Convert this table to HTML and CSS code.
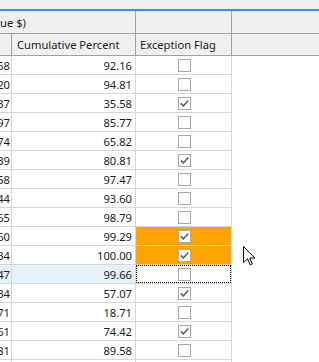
FILE: index.html
```html
<!DOCTYPE html>
<html>
<head>
<meta charset="utf-8">
<link rel="stylesheet" href="styles.css">
</head>
<body>
<div class="grid">
  <div class="topstrip"></div>
  <div class="blueline"></div>
  <div class="hrow h1">
    <div class="hc c12"><span class="grp">ue $)</span></div>
    <div class="hc c3"></div>
    <div class="hc rest"></div>
  </div>
  <div class="hrow h2">
    <div class="hc c1"></div>
    <div class="hc c2 lbl">Cumulative Percent</div>
    <div class="hc c3 lbl">Exception Flag</div>
    <div class="hc rest"></div>
  </div>
  <div id="body"></div>
</div>
<svg class="cursor" width="13" height="20" viewBox="0 0 13 20">
  <path d="M0.5 0.5 L0.5 16.5 L4.5 12.8 L7.2 18.8 L9.3 17.9 L6.7 12 L11.8 12 Z" fill="#fff" stroke="#000" stroke-width="1" stroke-linejoin="miter"/>
</svg>
<script>
const rows = [
  ["1,58","92.16",0],["1,20","94.81",0],["1,37","35.58",1],["1,97","85.77",0],
  ["1,74","65.82",0],["1,39","80.81",1],["1,58","97.47",0],["1,44","93.60",0],
  ["1,65","98.79",0],["1,60","99.29",1,"hl"],["1,34","100.00",1,"hl"],["1,47","99.66",0,"sel"],
  ["1,34","57.07",1],["1,71","18.71",0],["1,61","74.42",1],["1,81","89.58",0],["1,00","",0]
];
const check = '<svg width="13" height="13" viewBox="0 0 13 13"><path d="M2.8 6.4 L5.3 8.9 L10.3 3.5" fill="none" stroke="#5a5a5a" stroke-width="1.5"/></svg>';
const body = document.getElementById('body');
body.innerHTML = rows.map(r => {
  const cls = r[3] ? ' ' + r[3] : '';
  return '<div class="row' + cls + '">' +
    '<div class="c c1 num"><span>' + r[0] + '</span></div>' +
    '<div class="c c2 num">' + r[1] + '</div>' +
    '<div class="c c3 flag"><div class="fin"><span class="box">' + (r[2] ? check : '') + '</span></div></div>' +
    '<div class="c rest"></div>' +
    '</div>';
}).join('');
</script>
</body>
</html>
```
FILE: styles.css
```css
html, body {
  margin: 0;
  padding: 0;
  background: #fff;
  overflow: hidden;
}
body {
  font-family: "Noto Sans", "Open Sans", sans-serif;
  font-size: 11.2px;
  color: #1b1b1b;
  position: relative;
  width: 319px;
  height: 362px;
}
.grid {
  display: flex;
  flex-direction: column;
}
.topstrip {
  height: 9px;
  background: #f0f0f0;
}
.blueline {
  height: 2px;
  background: #3a8ee6;
}
.hrow {
  display: flex;
  background: #f0f0f0;
  border-bottom: 1px solid #a0a0a0;
}
.h1 { height: 22px; }
.h2 { height: 21px; }
.hc {
  box-sizing: border-box;
  border-right: 1px solid #a0a0a0;
  display: flex;
  align-items: center;
  overflow: hidden;
  white-space: nowrap;
}
.c1 { width: 12px; flex: none; }
.c2 { width: 124px; flex: none; }
.c12 { width: 136px; flex: none; }
.c3 { width: 96px; flex: none; }
.rest { flex: 1; border-right: none; }
.grp { margin-left: 0; }
.lbl { padding-left: 4px; }
.h2 .c2 { padding-left: 5px; }

.row {
  display: flex;
  height: 19px;
}
.c {
  box-sizing: border-box;
  height: 19px;
  border-right: 1px solid #d6d6d6;
  border-bottom: 1px solid #d6d6d6;
  display: flex;
  align-items: center;
  overflow: hidden;
  white-space: nowrap;
}
.row .rest { border: none; }
.num {
  justify-content: flex-end;
  padding-right: 3px;
}
.c1.num { padding-right: 1px; }
.flag {
  padding: 0;
}
.fin {
  width: 100%;
  height: 100%;
  box-sizing: border-box;
  display: flex;
  align-items: center;
  justify-content: center;
  padding-left: 2px;
}
.box {
  width: 13px;
  height: 13px;
  box-sizing: border-box;
  border: 1px solid #a8a8a8;
  background: #fff;
  display: block;
  position: relative;
}
.box svg {
  position: absolute;
  left: -1px;
  top: -1px;
}
.hl .flag {
  background: #ffa300;
  border-bottom-color: #f6cf8e;
}
.sel .c1, .sel .c2 {
  background: #e5f1fb;
}
.sel .fin {
  border: 1px dotted #000;
  padding-left: 1px;
}
.cursor {
  position: absolute;
  left: 243px;
  top: 246px;
}
```
